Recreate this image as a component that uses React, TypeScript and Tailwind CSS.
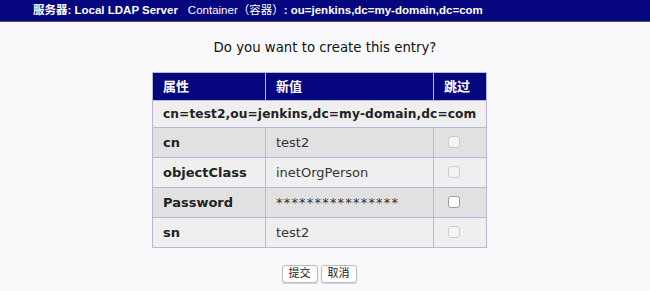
const rows = [
  { attr: "cn", value: "test2", bg: "bg-[#e1e1e1]" },
  { attr: "objectClass", value: "inetOrgPerson", bg: "bg-[#efefef]" },
  { attr: "Password", value: "****************", bg: "bg-[#e1e1e1]", strong: true },
  { attr: "sn", value: "test2", bg: "bg-[#efefef]" },
]

const font = "font-['DejaVu_Sans','Noto_Sans_CJK_SC',sans-serif]"

export default function App() {
  return (
    <div className={`min-h-[291px] w-[650px] bg-[#f9f9fb] ${font}`}>
      <div className="flex h-[22px] items-center border-b border-[#555] bg-[#06067f] pl-[33px] font-['Liberation_Sans','Noto_Sans_CJK_SC',sans-serif] text-[11.5px] text-white">
        <span className="font-bold">服务器: Local LDAP Server</span>
        <span className="ml-[10px]">Container（容器）</span>
        <span className="font-bold">: ou=jenkins,dc=my-domain,dc=com</span>
      </div>

      <p className="mt-[16px] text-center text-[13.3px] text-[#111]">Do you want to create this entry?</p>

      <table className="ml-[152px] mt-[14px] w-[335px] table-fixed border-collapse text-[13px] text-[#222]">
        <thead>
          <tr className="h-[28px] bg-[#06067f] text-left text-white">
            <th className="w-[113px] border border-[#b9b6dc] px-[10px] font-bold">属性</th>
            <th className="w-[168px] border border-[#b9b6dc] px-[10px] font-bold">新值</th>
            <th className="border border-[#b9b6dc] px-[10px] font-bold">跳过</th>
          </tr>
        </thead>
        <tbody>
          <tr className="h-[27px] bg-[#efefef]">
            <td colSpan={3} className="whitespace-nowrap border border-[#b9b6dc] px-[10px] text-[12.2px] font-bold tracking-[0.1px]">
              cn=test2,ou=jenkins,dc=my-domain,dc=com
            </td>
          </tr>
          {rows.map((r) => (
            <tr key={r.attr} className={`h-[30px] ${r.bg}`}>
              <td className="border border-[#b9b6dc] px-[10px] font-bold">{r.attr}</td>
              <td className={`border border-[#b9b6dc] px-[10px] text-[#333] ${r.strong ? "tracking-[1.2px]" : ""}`}>
                {r.value}
              </td>
              <td className="border border-[#b9b6dc] pl-[14px]">
                <span
                  className={`block h-[12px] w-[12px] rounded-[3px] border ${
                    r.strong ? "border-[#999] bg-white" : "border-[#ccc] bg-[#f4f4f4]"
                  }`}
                />
              </td>
            </tr>
          ))}
        </tbody>
      </table>

      <div className="mt-[17px] flex justify-center gap-[3px] pr-[12px]">
        <button className="h-[18px] rounded-[3px] border border-[#bbb] bg-white px-[6px] text-[11px] leading-none text-[#222] shadow-[0_1px_1px_rgba(0,0,0,0.15)]">
          提交
        </button>
        <button className="h-[18px] rounded-[3px] border border-[#bbb] bg-white px-[6px] text-[11px] leading-none text-[#222] shadow-[0_1px_1px_rgba(0,0,0,0.15)]">
          取消
        </button>
      </div>
    </div>
  )
}
